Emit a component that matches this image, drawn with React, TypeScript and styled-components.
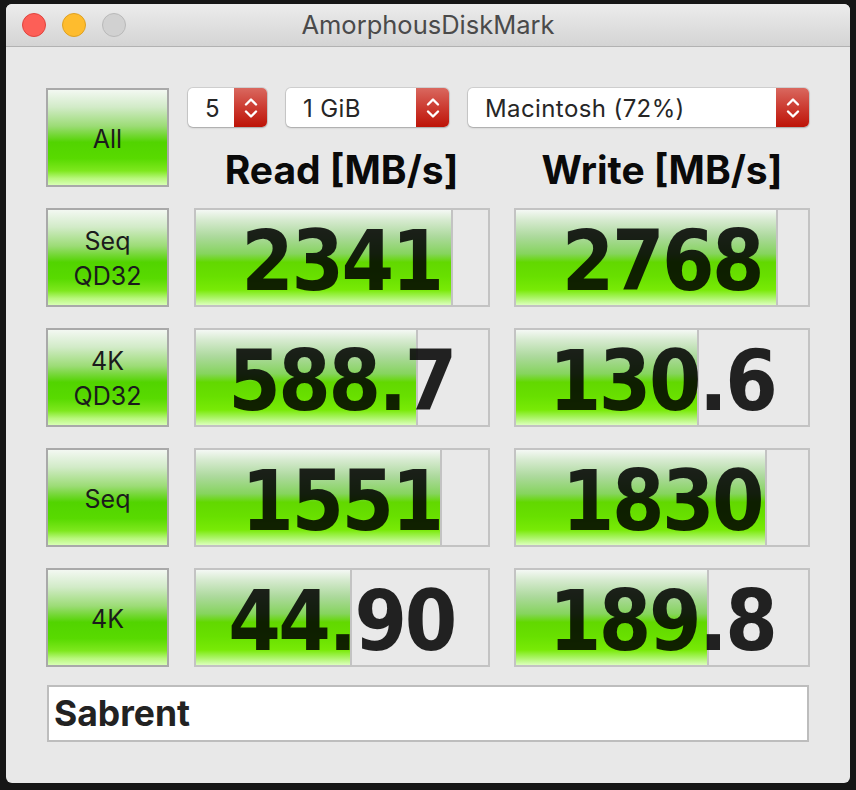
import React from 'react';
import styled, { createGlobalStyle } from 'styled-components';

const GlobalStyle = createGlobalStyle`
  html, body {
    margin: 0;
    padding: 0;
    background: #161616;
  }
  * { box-sizing: border-box; }
`;

const UI_FONT = `Inter, "Liberation Sans", Arial, sans-serif`;

const Window = styled.div`
  width: 844px;
  height: 779px;
  margin: 4px 6px;
  border-radius: 6px;
  overflow: hidden;
  background: #e8e8e8;
  display: flex;
  flex-direction: column;
`;

const TitleBar = styled.div`
  height: 43px;
  flex: none;
  display: flex;
  align-items: center;
  padding-left: 16px;
  position: relative;
  background: linear-gradient(180deg, #ececec 0%, #d4d4d4 100%);
  border-bottom: 1px solid #b2b2b2;
`;

const Lights = styled.div`
  display: flex;
  gap: 16px;
  margin-top: -1px;
`;

const Light = styled.span<{ $fill: string; $edge: string }>`
  width: 24px;
  height: 24px;
  border-radius: 50%;
  background: ${(p) => p.$fill};
  border: 1px solid ${(p) => p.$edge};
`;

const Title = styled.div`
  position: absolute;
  left: 0;
  right: 0;
  top: 0;
  bottom: 0;
  display: flex;
  align-items: center;
  justify-content: center;
  font-family: ${UI_FONT};
  font-size: 25.5px;
  color: #4a4a4a;
  pointer-events: none;
  padding-bottom: 2px;
`;

const Content = styled.div`
  flex: 1;
  padding: 41px 40px 0 40px;
  display: flex;
  flex-direction: column;
`;

const Board = styled.div`
  display: grid;
  grid-template-columns: 123px 296px 296px;
  grid-template-rows: repeat(5, 99px);
  column-gap: 24.5px;
  row-gap: 21px;
`;

const GreenButton = styled.button`
  all: unset;
  box-sizing: border-box;
  width: 123px;
  height: 99px;
  border: 2px solid #a9a9a9;
  background: linear-gradient(
    180deg,
    #f3f8f2 0%,
    #d2ebc8 18%,
    #9cdc76 38%,
    #52d400 55%,
    #58da00 72%,
    #7ee81e 85%,
    #b8f77c 93%,
    #d8ffb4 100%
  );
  display: flex;
  flex-direction: column;
  align-items: center;
  justify-content: center;
  padding-top: 3px;
  font-family: ${UI_FONT};
  font-size: 25px;
  line-height: 35px;
  color: #1b1b1b;
  text-align: center;
`;

const TopArea = styled.div`
  grid-column: 2 / span 2;
  display: flex;
  flex-direction: column;
`;

const SelectRow = styled.div`
  display: flex;
  gap: 19px;
  margin-left: -5.5px;
  height: 39px;
`;

const Select = styled.div<{ $w: number }>`
  width: ${(p) => p.$w}px;
  height: 39px;
  display: flex;
  background: #ffffff;
  border-radius: 5px;
  box-shadow: 0 0 0 1px rgba(0, 0, 0, 0.1), 0 1px 2px rgba(0, 0, 0, 0.2);
`;

const SelectText = styled.div`
  flex: 1;
  display: flex;
  align-items: center;
  padding: 2px 0 0 17px;
  font-family: ${UI_FONT};
  font-size: 24px;
  letter-spacing: 0.4px;
  color: #262626;
`;

const Stepper = styled.div`
  width: 33px;
  flex: none;
  border-radius: 0 5px 5px 0;
  background: linear-gradient(180deg, #d9685f 0%, #cc3b31 50%, #bd1307 100%);
  display: flex;
  align-items: center;
  justify-content: center;
`;

const Headers = styled.div`
  display: grid;
  grid-template-columns: 296px 296px;
  column-gap: 24.5px;
`;

const Header = styled.div`
  margin-top: 19px;
  text-align: center;
  font-family: ${UI_FONT};
  font-weight: 700;
  font-size: 39px;
  line-height: 48px;
  color: #0a0a0a;
`;

const Cell = styled.div`
  position: relative;
  height: 99px;
  border: 2px solid #c3c3c3;
  background: #e9e9e9;
`;

const Fill = styled.div`
  position: absolute;
  left: 0;
  top: 0;
  bottom: 0;
  border-right: 2px solid #c3c3c3;
  background: linear-gradient(
    180deg,
    #f4f8f4 0%,
    #d8ebd2 10%,
    #acd99c 28%,
    #86d45e 46%,
    #62d800 55%,
    #68e000 70%,
    #78ea06 84%,
    #a8f462 92%,
    #dcffbc 100%
  );
`;

const Value = styled.div`
  position: relative;
  margin-top: 2px;
  text-align: center;
  font-family: "DejaVu Sans", Verdana, sans-serif;
  font-stretch: condensed;
  font-weight: 700;
  font-size: 84px;
  letter-spacing: -2.5px;
  line-height: 98px;
  color: rgba(0, 0, 0, 0.86);
  white-space: nowrap;
`;

const NameField = styled.div`
  margin: 18px 1px 0 1px;
  height: 57px;
  background: #ffffff;
  border: 2px solid #bdbdbd;
  padding-left: 5px;
  display: flex;
  align-items: center;
  font-family: ${UI_FONT};
  font-weight: 700;
  font-size: 35.5px;
  color: #222222;
`;

const Chevrons = () => (
  <svg width="14" height="24" viewBox="0 0 14 24" fill="none">
    <path d="M2 8.5 L7 3.5 L12 8.5" stroke="#fff" strokeWidth="2.4" strokeLinecap="round" strokeLinejoin="round" />
    <path d="M2 15.5 L7 20.5 L12 15.5" stroke="#fff" strokeWidth="2.4" strokeLinecap="round" strokeLinejoin="round" />
  </svg>
);

type Result = { v: string; w: number };
const rows: { label: string[]; read: Result; write: Result }[] = [
  { label: ['Seq', 'QD32'], read: { v: '2341', w: 257 }, write: { v: '2768', w: 262 } },
  { label: ['4K', 'QD32'], read: { v: '588.7', w: 222 }, write: { v: '130.6', w: 183 } },
  { label: ['Seq'], read: { v: '1551', w: 246 }, write: { v: '1830', w: 251 } },
  { label: ['4K'], read: { v: '44.90', w: 156 }, write: { v: '189.8', w: 193 } },
];

const ResultCell = ({ r }: { r: Result }) => (
  <Cell>
    <Fill style={{ width: `${(r.w / 292) * 100}%` }} />
    <Value>{r.v}</Value>
  </Cell>
);

export default function App() {
  return (
    <>
      <GlobalStyle />
      <Window>
        <TitleBar>
          <Lights>
            <Light $fill="#fd5f57" $edge="#e0443e" />
            <Light $fill="#febc2e" $edge="#dea123" />
            <Light $fill="#d1d1d1" $edge="#b9b9b9" />
          </Lights>
          <Title>AmorphousDiskMark</Title>
        </TitleBar>
        <Content>
          <Board>
            <GreenButton>All</GreenButton>
            <TopArea>
              <SelectRow>
                <Select $w={79}>
                  <SelectText>5</SelectText>
                  <Stepper><Chevrons /></Stepper>
                </Select>
                <Select $w={163}>
                  <SelectText>1 GiB</SelectText>
                  <Stepper><Chevrons /></Stepper>
                </Select>
                <Select $w={341}>
                  <SelectText>Macintosh (72%)</SelectText>
                  <Stepper><Chevrons /></Stepper>
                </Select>
              </SelectRow>
              <Headers>
                <Header>Read [MB/s]</Header>
                <Header>Write [MB/s]</Header>
              </Headers>
            </TopArea>
            {rows.map((row) => (
              <React.Fragment key={row.label.join(' ') + row.read.v}>
                <GreenButton>
                  {row.label.map((l) => (
                    <span key={l}>{l}</span>
                  ))}
                </GreenButton>
                <ResultCell r={row.read} />
                <ResultCell r={row.write} />
              </React.Fragment>
            ))}
          </Board>
          <NameField>Sabrent</NameField>
        </Content>
      </Window>
    </>
  );
}
